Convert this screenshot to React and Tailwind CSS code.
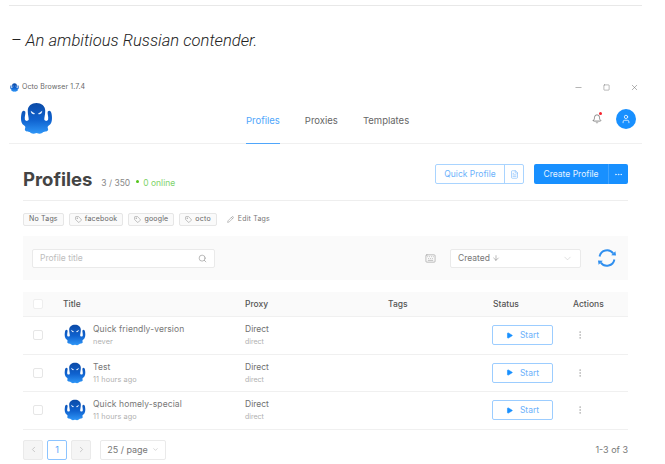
import { useId } from 'react'
import { Search, ChevronDown, ChevronLeft, ChevronRight, FileText, Tag, Pencil, Keyboard, Play, MoreVertical, MoreHorizontal, Bell, User, Minus, Square, X, ArrowDown } from 'lucide-react'

const profiles = [
  { title: 'Quick friendly-version', time: 'never' },
  { title: 'Test', time: '11 hours ago' },
  { title: 'Quick homely-special', time: '11 hours ago' },
]

function Octo({ size }) {
  const id = useId()
  return (
    <svg width={size} height={size} viewBox="0 0 34 34" className="shrink-0">
      <defs>
        <linearGradient id={id} x1="0" y1="0" x2="0" y2="1">
          <stop offset="0" stopColor="#0b4aa6" />
          <stop offset="0.55" stopColor="#0f62cf" />
          <stop offset="1" stopColor="#2f96f7" />
        </linearGradient>
      </defs>
      <path
        fill={`url(#${id})`}
        d="M17 1C22 1 26 4 26 9C26 13 25 16 25 18C26 20 28 20 29 18C29.5 15 28 12 28.5 10C30 8 32 9 32.5 12C33.5 17 33 22 30 24C28.5 25 28 26 29 28C29 31 25 30 24 31C22 33 20 33 17 32C14 33 12 33 10 31C9 30 5 31 5 28C6 26 5.5 25 4 24C1 22 .5 17 1.5 12C2 9 4 8 5.5 10C6 12 4.5 15 5 18C6 20 8 20 9 18C9 16 8 13 8 9C8 4 12 1 17 1Z"
      />
      <path fill="#e8f2ff" d="M11 9L15.5 12C14 13.4 11.5 12.4 11 9Z" />
      <path fill="#e8f2ff" d="M23 9L18.5 12C20 13.4 22.5 12.4 23 9Z" />
    </svg>
  )
}

function Sync() {
  return (
    <svg width="20" height="20" viewBox="0 0 20 20" className="ml-[16px] shrink-0">
      <g fill="none" stroke="#2f8fef" strokeWidth="1.9">
        <path d="M2.6 8.5A7.6 7.6 0 0 1 16.2 5.4" />
        <path d="M17.4 11.5A7.6 7.6 0 0 1 3.8 14.6" />
      </g>
      <path fill="#2f8fef" d="M14.2 7.2L19 7.6L18.4 3.2Z" />
      <path fill="#2f8fef" d="M5.8 12.8L1 12.4L1.6 16.8Z" />
    </svg>
  )
}

function TagChip({ label }) {
  return (
    <span className="h-[13px] px-[5px] flex items-center gap-[3px] border border-[#e6e6e6] rounded-[2px] bg-[#fafafa] text-[7px] tracking-[0.2px] text-[#666]">
      <Tag size={7} strokeWidth={1.5} className="text-[#777]" />
      {label}
    </span>
  )
}

function Row({ profile }) {
  return (
    <div className="grid grid-cols-[40px_182px_143px_105px_80px_55px] h-[37.6px] items-center border-t border-[#f0f0f0]">
      <span className="ml-[10px] w-[10px] h-[10px] border border-[#e6e6e6] rounded-[2px]" />
      <div className="flex items-center gap-[7px] ml-[1px]">
        <Octo size={22} />
        <div className="flex flex-col gap-[2px]">
          <span className="text-[8.5px] leading-[11px] tracking-[0.1px] text-[#777]">{profile.title}</span>
          <span className="text-[7.3px] leading-[9px] tracking-[0.1px] text-[#b0b0b0]">{profile.time}</span>
        </div>
      </div>
      <div className="flex flex-col gap-[2px]">
        <span className="text-[8.5px] leading-[11px] text-[#707070]">Direct</span>
        <span className="text-[7px] leading-[9px] text-[#b0b0b0]">direct</span>
      </div>
      <span />
      <button className="-ml-[1px] w-[61px] h-[20px] flex items-center justify-center gap-[7px] border border-[#9ccdff] rounded-[2px] text-[8.5px] text-[#6cb2fb]">
        <Play size={7} fill="#1890ff" stroke="#1890ff" />
        Start
      </button>
      <MoreVertical size={10} strokeWidth={1.6} className="ml-[2px] text-[#aaa]" />
    </div>
  )
}

export default function App() {
  return (
    <div className="w-[665px] h-[464px] overflow-hidden bg-white font-['Inter',sans-serif]">
      <div className="pt-[5px] pl-[9px] pr-[23px]">
        <div className="border-t border-[#e8e8e8]" />
        <p className="h-[74px] pt-[25px] pl-[2px] font-['Roboto',sans-serif] font-light italic text-[16.6px] leading-[19px] text-[#222]">
          – An ambitious Russian contender.
        </p>

        {/* title bar */}
        <div className="h-[15px] flex items-center">
          <span className="ml-[1px]"><Octo size={9} /></span>
          <span className="ml-[3px] text-[7px] tracking-[0.1px] text-[#666]">Octo Browser 1.7.4</span>
          <div className="ml-auto flex items-center gap-[20px] text-[#666] pr-[3px]">
            <Minus size={9} strokeWidth={1.3} />
            <Square size={7} strokeWidth={1.5} />
            <X size={9} strokeWidth={1.3} />
          </div>
        </div>

        {/* top nav */}
        <div className="h-[49px] flex items-center border-b border-[#f0f0f0] relative">
          <div className="ml-[11px] pb-[1px]">
            <Octo size={33} />
          </div>
          <nav className="ml-[193px] self-stretch flex gap-[25px] text-[9.5px] text-[#666]">
            <span className="relative flex items-center pt-[4px] text-[#4fa6fb]">
              Profiles
              <span className="absolute left-0 right-0 -bottom-[1px] h-[1px] bg-[#4fa6fb]" />
            </span>
            <span className="flex items-center pt-[4px]">Proxies</span>
            <span className="flex items-center pt-[4px]">Templates</span>
          </nav>
          <div className="ml-auto flex items-center gap-[14px] pr-[6px]">
            <span className="relative">
              <Bell size={10} strokeWidth={1.6} className="text-[#555]" />
              <span className="absolute -top-[2px] right-0 w-[3px] h-[3px] rounded-full bg-[#f5222d]" />
            </span>
            <span className="w-[20px] h-[20px] rounded-full bg-[#1890ff] flex items-center justify-center">
              <User size={10} strokeWidth={1.8} className="text-white" />
            </span>
          </div>
        </div>

        <main className="pl-[14px] pr-[14px]">
          {/* heading */}
          <div className="h-[57px] flex items-center border-b border-[#eee]">
            <div className="flex items-baseline mt-[13px]">
              <h1 className="text-[18.5px] leading-[24px] font-bold text-[#444]">Profiles</h1>
              <span className="ml-[9px] text-[8.5px] text-[#888]">3 / 350</span>
              <span className="ml-[6px] w-[3px] h-[3px] self-center mt-[5px] rounded-full bg-[#52c41a]" />
              <span className="ml-[4px] text-[8.5px] text-[#7ed36b]">0 online</span>
            </div>
            <div className="ml-auto mt-[4px] flex gap-[10px]">
              <div className="flex h-[20px] border border-[#a9d4ff] rounded-[2px] text-[8.5px] text-[#6cb2fb]">
                <span className="w-[68px] flex items-center justify-center">Quick Profile</span>
                <span className="w-[19px] flex items-center justify-center border-l border-[#a9d4ff]">
                  <FileText size={9} strokeWidth={1.5} />
                </span>
              </div>
              <div className="flex h-[20px] rounded-[2px] bg-[#1890ff] text-[8.5px] text-[#e6f3ff]">
                <span className="w-[74px] flex items-center justify-center">Create Profile</span>
                <span className="w-[20px] flex items-center justify-center border-l border-[#3fa3ff]">
                  <MoreHorizontal size={9} />
                </span>
              </div>
            </div>
          </div>

          {/* tags */}
          <div className="mt-[12px] flex items-center gap-[5px]">
            <span className="h-[13px] px-[5px] flex items-center border border-[#e6e6e6] rounded-[2px] bg-[#fafafa] text-[7px] tracking-[0.2px] text-[#666]">No Tags</span>
            <TagChip label="facebook" />
            <TagChip label="google" />
            <TagChip label="octo" />
            <span className="ml-[5px] flex items-center gap-[4px] text-[7px] tracking-[0.2px] text-[#777]">
              <Pencil size={7} strokeWidth={1.5} />
              Edit Tags
            </span>
          </div>

          {/* filters */}
          <div className="mt-[10px] h-[44px] bg-[#fafafa] flex items-center pl-[9px]">
            <div className="w-[183px] h-[19px] px-[7px] flex items-center justify-between bg-white border border-[#eaeaea] rounded-[2px] text-[8.5px] text-[#bdbdbd]">
              Profile title
              <Search size={9} strokeWidth={1.5} className="text-[#888]" />
            </div>
            <Keyboard size={11} strokeWidth={1.4} className="ml-[210px] text-[#999]" />
            <div className="ml-[14px] w-[131px] h-[19px] px-[7px] flex items-center bg-white border border-[#eaeaea] rounded-[2px] text-[8.5px] text-[#777]">
              Created
              <ArrowDown size={8} strokeWidth={1.5} className="ml-[2px]" />
              <ChevronDown size={11} strokeWidth={1} className="ml-auto text-[#bbb]" />
            </div>
            <Sync />
          </div>

          {/* table */}
          <div className="mt-[12px] border-b border-[#f0f0f0]">
            <div className="grid grid-cols-[40px_182px_143px_105px_80px_55px] h-[24px] items-center bg-[#fafafa] text-[8.5px] font-medium text-[#555]">
              <span className="ml-[10px] w-[10px] h-[10px] bg-white border border-[#eee] rounded-[2px]" />
              <span>Title</span>
              <span>Proxy</span>
              <span>Tags</span>
              <span>Status</span>
              <span>Actions</span>
            </div>
            {profiles.map((profile) => (
              <Row key={profile.title} profile={profile} />
            ))}
          </div>

          {/* pagination */}
          <div className="mt-[10px] flex items-center text-[9px] text-[#777]">
            <span className="w-[20px] h-[20px] flex items-center justify-center bg-[#f5f5f5] border border-[#eaeaea] rounded-[2px] text-[#bbb]">
              <ChevronLeft size={9} />
            </span>
            <span className="ml-[4px] w-[20px] h-[20px] flex items-center justify-center border border-[#8cc4ff] rounded-[2px] text-[#4fa6fb]">1</span>
            <span className="ml-[4px] w-[20px] h-[20px] flex items-center justify-center bg-[#f5f5f5] border border-[#eaeaea] rounded-[2px] text-[#bbb]">
              <ChevronRight size={9} />
            </span>
            <span className="ml-[9px] w-[66px] h-[20px] flex items-center justify-center gap-[4px] border border-[#eaeaea] rounded-[2px]">
              25 / page
              <ChevronDown size={7} className="text-[#bbb]" />
            </span>
            <span className="ml-auto text-[#777]">1-3 of 3</span>
          </div>
        </main>
      </div>
    </div>
  )
}
